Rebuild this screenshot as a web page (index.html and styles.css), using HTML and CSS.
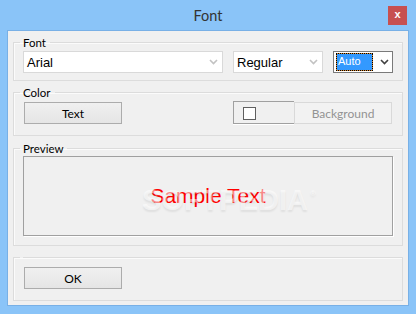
FILE: index.html
```html
<!DOCTYPE html>
<html lang="en">

<head>
    <meta charset="UTF-8">
    <meta name="viewport" content="width=device-width, initial-scale=1.0">
    <link rel="stylesheet" href="styles.css">
    <title>Font</title>
</head>

<body>

    <div class="janela">

        <div class="titulo">
            <span></span>
            <span class="titulo-texto">Font</span>
            <button class="fechar">x</button>
        </div>

        <div class="cliente">

            <fieldset class="grupo grupo-fonte">
                <legend>Font</legend>
                <div class="linha">
                    <div class="combo combo-nome">
                        <span>Arial</span>
                        <svg class="seta" width="9" height="6" viewBox="0 0 9 6"><polyline points="1,1 4.5,4.5 8,1" /></svg>
                    </div>
                    <div class="combo combo-estilo">
                        <span>Regular</span>
                        <svg class="seta" width="9" height="6" viewBox="0 0 9 6"><polyline points="1,1 4.5,4.5 8,1" /></svg>
                    </div>
                    <div class="combo combo-tamanho">
                        <span class="selecao">Auto</span>
                        <svg class="seta escura" width="9" height="6" viewBox="0 0 9 6"><polyline points="1,1 4.5,4.5 8,1" /></svg>
                    </div>
                </div>
            </fieldset>

            <fieldset class="grupo grupo-cor">
                <legend>Color</legend>
                <div class="linha">
                    <button class="botao">Text</button>
                    <div class="fundo">
                        <div class="amostra"><span class="caixa"></span></div>
                        <button class="botao" disabled>Background</button>
                    </div>
                </div>
            </fieldset>

            <fieldset class="grupo grupo-previa">
                <legend>Preview</legend>
                <div class="previa">
                    <span class="exemplo">Sample Text</span>
                    <span class="marca">SOFTPEDIA<sup>&reg;</sup></span>
                </div>
            </fieldset>

            <fieldset class="grupo grupo-ok">
                <legend></legend>
                <div class="linha">
                    <button class="botao">OK</button>
                </div>
            </fieldset>

        </div>

    </div>

</body>
</html>
```

FILE: styles.css
```css
body {
    margin: 0;
    background: #8ac4f8;
}

.janela {
    width: 416px;
    height: 314px;
    background: #8ac4f8;
    font-family: 'Lato', 'Liberation Sans', sans-serif;
    font-size: 11.5px;
    color: #000;
}

.titulo {
    display: grid;
    grid-template-columns: 1fr auto 1fr;
    height: 31px;
}

.titulo-texto {
    font-size: 14.5px;
    line-height: 31px;
    color: #333;
}

.fechar {
    justify-self: end;
    align-self: start;
    width: 19px;
    height: 19px;
    margin: 6px 9px 0 0;
    padding: 0 0 2px 0;
    border: none;
    background: #c75050;
    color: #fff;
    font-family: 'Liberation Sans', sans-serif;
    font-weight: bold;
    font-size: 11px;
    line-height: 17px;
}

.cliente {
    height: 274px;
    margin: 0 8px;
    padding: 0 5px;
    box-sizing: border-box;
    background: #f0f0f0;
    outline: 1px solid #78b0e6;
    overflow: hidden;
}

.grupo {
    margin: 0;
    padding: 0;
    min-inline-size: 0;
    border: 1px solid #dcdcdc;
    box-shadow: inset 1px 1px 0 #fbfbfb;
}

.grupo > legend {
    margin-left: 6px;
    padding: 0 4px 0 3px;
    line-height: 15px;
}

.grupo-fonte {
    margin-top: 4px;
    padding: 1px 0 7px 0;
}

.grupo-cor {
    margin-top: 4px;
    padding: 2px 0 11px 0;
}

.grupo-previa {
    margin-top: 5px;
    padding: 0 0 9px 0;
}

.grupo-ok {
    margin-top: 11px;
    padding: 9px 0 11px 0;
}

.grupo-ok > legend {
    padding: 0 1px 0 2px;
    height: 0;
    line-height: 0;
}

.linha {
    display: flex;
    align-items: flex-start;
}

.grupo-fonte .linha {
    gap: 10px;
    padding: 0 9px;
}

.grupo-cor .linha {
    justify-content: space-between;
    padding: 0 10px;
}

.grupo-ok .linha {
    padding: 0 10px;
}

/* combos */

.combo {
    display: flex;
    align-items: center;
    justify-content: space-between;
    height: 22px;
    box-sizing: border-box;
    padding: 0 4px 0 3px;
    border: 1px solid #d9d9d9;
    background: #fff;
    font-family: 'Liberation Sans', Arial, sans-serif;
    font-size: 13px;
}

.combo-nome {
    width: 200px;
}

.combo-estilo {
    width: 90px;
}

.combo-tamanho {
    width: 60px;
    padding: 1px 3px 1px 2px;
    align-items: stretch;
    border-color: #7a7a7a;
    font-size: 11px;
}

.selecao {
    width: 37px;
    box-sizing: border-box;
    padding: 1px 0 0 1px;
    border: 1px dotted #000;
    background: linear-gradient(#3399ff, #3399ff) padding-box, linear-gradient(#d98a35, #d98a35) border-box;
    color: #fff;
}

.combo-tamanho .seta {
    align-self: center;
}

.seta polyline {
    fill: none;
    stroke: #c2c2c2;
    stroke-width: 1.6;
}

.seta.escura polyline {
    stroke: #404040;
}

/* botoes */

.botao {
    width: 98px;
    height: 22px;
    padding: 0;
    border: 1px solid #acacac;
    background: linear-gradient(#f0f0f0, #e5e5e5);
    font-family: 'Lato', 'Liberation Sans', sans-serif;
    font-size: 12px;
    color: #000;
}

.botao:disabled {
    border-color: #d9d9d9;
    background: #f2f2f2;
    color: #939393;
}

.fundo {
    display: flex;
    align-items: flex-start;
}

.amostra {
    width: 61px;
    height: 23px;
    margin-top: -1px;
    box-sizing: border-box;
    padding: 5px 0 0 9px;
    border: 1px solid #a0a0a0;
    border-right: none;
    box-shadow: 0 1px 0 #fff;
}

.caixa {
    display: block;
    width: 13px;
    height: 13px;
    box-sizing: border-box;
    border: 1px solid #5f5f5f;
    background: #fff;
}

/* previa */

.previa {
    position: relative;
    display: flex;
    align-items: center;
    justify-content: center;
    height: 80px;
    margin: 0 9px;
    box-sizing: border-box;
    border: 1px solid #a0a0a0;
    box-shadow: 1px 1px 0 #fff;
}

.exemplo {
    font-family: 'Liberation Sans', Arial, sans-serif;
    font-size: 21px;
    color: #ff0000;
}

.marca {
    position: absolute;
    left: 118px;
    top: 22px;
    font-family: 'Liberation Sans', Arial, sans-serif;
    font-weight: bold;
    font-size: 29px;
    line-height: 29px;
    color: rgba(255, 255, 255, 0.55);
    text-shadow: 0 2px 2px rgba(0, 0, 0, 0.07);
}

.marca sup {
    font-size: 8px;
    vertical-align: 14px;
    margin-left: 2px;
}
```
